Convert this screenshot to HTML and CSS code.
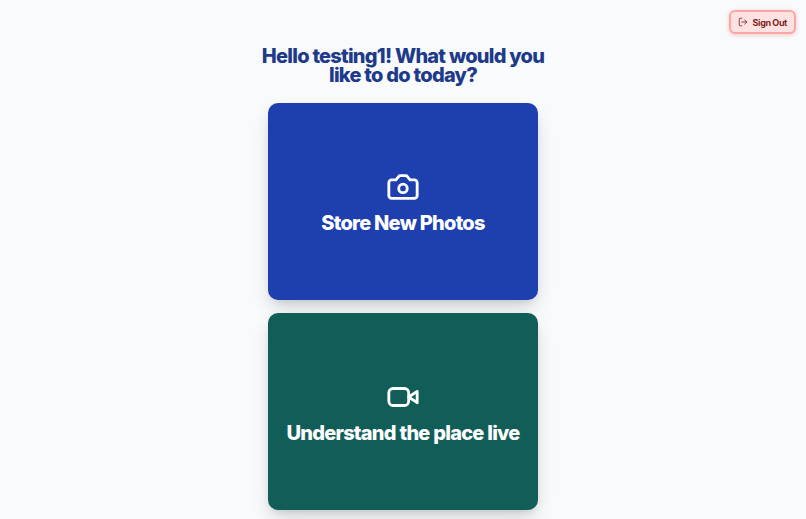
FILE: index.html
```html
<!DOCTYPE html>
<html lang="en">
<head>
  <meta charset="UTF-8" />
  <title>Home</title>
  <link rel="stylesheet" href="styles.css">
</head>
<body>
  <header class="topbar">
    <button class="signout" type="button">
      <svg width="10" height="10" viewBox="0 0 24 24" fill="none" stroke="currentColor" stroke-width="2" stroke-linecap="round" stroke-linejoin="round">
        <path d="M9 21H5a2 2 0 0 1-2-2V5a2 2 0 0 1 2-2h4"/>
        <path d="M16 17l5-5-5-5"/>
        <path d="M21 12H9"/>
      </svg>
      Sign Out
    </button>
  </header>

  <main class="content">
    <h1>Hello testing1! What would you like to do today?</h1>

    <a class="card card-blue" href="#">
      <svg width="34" height="34" viewBox="0 0 24 24" fill="none" stroke="currentColor" stroke-width="2" stroke-linecap="round" stroke-linejoin="round">
        <path d="M14.5 4h-5L7 7H4a2 2 0 0 0-2 2v9a2 2 0 0 0 2 2h16a2 2 0 0 0 2-2V9a2 2 0 0 0-2-2h-3l-2.5-3z"/>
        <circle cx="12" cy="13" r="3"/>
      </svg>
      <span>Store New Photos</span>
    </a>

    <a class="card card-green" href="#">
      <svg width="34" height="34" viewBox="0 0 24 24" fill="none" stroke="currentColor" stroke-width="2" stroke-linecap="round" stroke-linejoin="round">
        <path d="M22 8l-6 4 6 4V8z"/>
        <rect x="2" y="6" width="14" height="12" rx="3"/>
      </svg>
      <span>Understand the place live</span>
    </a>
  </main>
</body>
</html>
```

FILE: styles.css
```css
* {
  box-sizing: border-box;
}
html, body {
  height: 100%;
}
body {
  margin: 0;
  background: #f9fafc;
  font-family: Inter, sans-serif;
  overflow: hidden;
}
.topbar {
  display: flex;
  justify-content: flex-end;
  padding: 10px 10px 0 0;
  height: 47px;
}
.signout {
  display: flex;
  align-items: center;
  gap: 5px;
  height: 24px;
  padding: 0 7px;
  background: #fee2e2;
  color: #7f1d1d;
  border: 2px solid #fca5a5;
  border-radius: 6px;
  font-family: Inter, sans-serif;
  font-size: 9px;
  font-weight: 700;
  letter-spacing: -0.4px;
  box-shadow: 0 1px 4px rgba(220,38,38,0.25);
}
.content {
  display: flex;
  flex-direction: column;
  align-items: center;
}
h1 {
  width: 300px;
  margin: 0 0 18px;
  text-align: center;
  color: #1e3a8a;
  font-size: 20px;
  font-weight: 800;
  line-height: 19px;
  letter-spacing: -0.75px;
}
.card {
  display: flex;
  flex-direction: column;
  align-items: center;
  justify-content: center;
  gap: 7px;
  width: 270px;
  height: 196.5px;
  margin-bottom: 13.5px;
  padding-top: 2px;
  border-radius: 10px;
  color: white;
  text-decoration: none;
  font-size: 20px;
  font-weight: 800;
  letter-spacing: -0.75px;
  box-shadow: 0 10px 20px -3px rgba(0,0,0,0.16), 0 4px 8px -4px rgba(0,0,0,0.14);
}
.card-blue {
  background: #1e40af;
}
.card-green {
  background: #115e59;
}
```
